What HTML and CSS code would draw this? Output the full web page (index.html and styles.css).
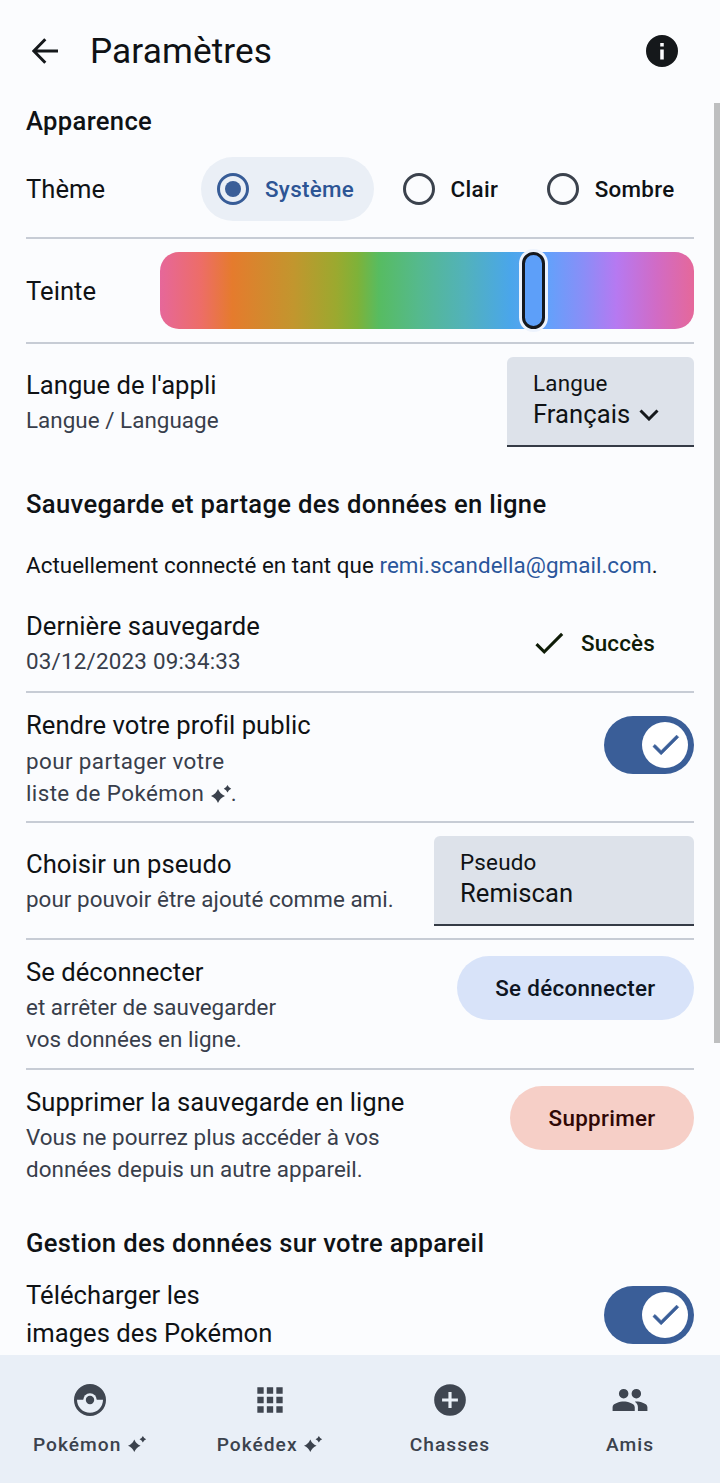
FILE: index.html
```html
<!DOCTYPE html>
<html lang="fr">
<head>
<meta charset="utf-8">
<title>Paramètres</title>
<link rel="stylesheet" href="styles.css">
</head>
<body>
<svg class="defs" aria-hidden="true">
  <symbol id="sparkle" viewBox="0 0 22 20"><path d="M8 5 Q10 10 15 12 Q10 14 8 19 Q6 14 1 12 Q6 10 8 5Z"/><path d="M17.500 1 Q18.600 3.600 21.200 4.700 Q18.600 5.800 17.500 8.400 Q16.400 5.800 13.800 4.700 Q16.400 3.600 17.500 1Z"/></symbol>
  <symbol id="done" viewBox="0 0 24 24"><path d="M9 16.2 4.800 12l-1.400 1.400L9 19 21 7l-1.400-1.400z"/></symbol>
</svg>
<div class="app">
  <header class="topbar">
    <svg class="back" viewBox="0 0 26 26"><path d="M26 13H2M13.300 1.300 1.800 13 13.300 24.700"/></svg>
    <h1 class="title">Paramètres</h1>
    <svg class="info" viewBox="2 2 20 20"><path d="M12 2a10 10 0 1 0 0 20 10 10 0 0 0 0-20zm1.100 15.300h-2.200v-6.300h2.200zm0-8.100h-2.200V7h2.200z"/></svg>
  </header>

  <main class="content">
    <h2 class="heading">Apparence</h2>
    <section class="row row-theme">
      <div class="label">Thème</div>
      <div class="radios">
        <label class="radio selected"><span class="dot"></span>Système</label>
        <label class="radio"><span class="dot"></span>Clair</label>
        <label class="radio"><span class="dot"></span>Sombre</label>
      </div>
    </section>
    <section class="row row-hue">
      <div class="label">Teinte</div>
      <div class="hue"><span class="thumb"></span></div>
    </section>
    <section class="row row-lang">
      <div class="texts"><div class="label">Langue de l'appli</div><div class="sub">Langue / Language</div></div>
      <div class="field field-lang">
        <span class="field-name">Langue</span>
        <span class="field-value">Français<svg class="chevron" viewBox="0 0 20 12"><path d="M1.500 1.500 10 10l8.500-8.500"/></svg></span>
      </div>
    </section>

    <h2 class="heading heading-online">Sauvegarde et partage des données en ligne</h2>
    <p class="account">Actuellement connecté en tant que <a class="mail">remi.scandella@gmail.com</a>.</p>
    <section class="row row-last">
      <div class="texts"><div class="label">Dernière sauvegarde</div><div class="sub digits">03/12/2023 09:34:33</div></div>
      <div class="status"><svg class="status-icon"><use href="#done"/></svg>Succès</div>
    </section>
    <section class="row row-tall">
      <div class="texts"><div class="label">Rendre votre profil public</div><div class="sub wide">pour partager votre<br>liste de Pokémon <svg class="spark"><use href="#sparkle"/></svg>.</div></div>
      <div class="switch"><span class="knob"><svg class="check"><use href="#done"/></svg></span></div>
    </section>
    <section class="row row-nick">
      <div class="texts"><div class="label">Choisir un pseudo</div><div class="sub">pour pouvoir être ajouté comme ami.</div></div>
      <div class="field field-nick"><span class="field-name">Pseudo</span><span class="field-value">Remiscan</span></div>
    </section>
    <section class="row row-tall">
      <div class="texts"><div class="label">Se déconnecter</div><div class="sub">et arrêter de sauvegarder<br>vos données en ligne.</div></div>
      <button class="button">Se déconnecter</button>
    </section>
    <section class="row row-tall row-end">
      <div class="texts"><div class="label">Supprimer la sauvegarde en ligne</div><div class="sub">Vous ne pourrez plus accéder à vos<br>données depuis un autre appareil.</div></div>
      <button class="button danger">Supprimer</button>
    </section>

    <h2 class="heading heading-device">Gestion des données sur votre appareil</h2>
    <section class="row row-download row-end">
      <div class="label">Télécharger les<br>images des Pokémon</div>
      <div class="switch"><span class="knob"><svg class="check"><use href="#done"/></svg></span></div>
    </section>
    <span class="scrollbar"></span>
  </main>

  <nav class="tabs">
    <a class="tab">
      <svg class="tab-icon" viewBox="0 0 38 38"><path fill-rule="evenodd" d="M19 3a16 16 0 1 0 0 32 16 16 0 0 0 0-32zM6 18.700h26a13 13 0 0 1-26 0z"/><circle class="cut" cx="19" cy="19" r="6.800"/><circle cx="19" cy="19" r="4.200"/></svg>
      <span class="tab-text">Pokémon <svg class="spark"><use href="#sparkle"/></svg></span>
    </a>
    <a class="tab">
      <svg class="tab-icon" viewBox="0 0 24 24"><path d="M4 8h4V4H4zm6 12h4v-4h-4zm-6 0h4v-4H4zm0-6h4v-4H4zm6 0h4v-4h-4zm6-10v4h4V4zm-6 4h4V4h-4zm6 6h4v-4h-4zm0 6h4v-4h-4z"/></svg>
      <span class="tab-text">Pokédex <svg class="spark"><use href="#sparkle"/></svg></span>
    </a>
    <a class="tab">
      <svg class="tab-icon" viewBox="0 0 24 24"><path d="M12 2a10 10 0 1 0 0 20 10 10 0 0 0 0-20zm5 11h-4v4h-2v-4H7v-2h4V7h2v4h4z"/></svg>
      <span class="tab-text">Chasses</span>
    </a>
    <a class="tab">
      <svg class="tab-icon" viewBox="0 0 24 24"><path d="M16 11a3 3 0 1 0 0-6 3 3 0 0 0 0 6zM8 11a3 3 0 1 0 0-6 3 3 0 0 0 0 6zM8 13c-2.330 0-7 1.170-7 3.500V19h14v-2.500C15 14.170 10.330 13 8 13zM16 13c-.290 0-.620.020-.970.050 1.160.840 1.970 1.970 1.970 3.450V19h6v-2.500c0-2.330-4.670-3.500-7-3.500z"/></svg>
      <span class="tab-text">Amis</span>
    </a>
  </nav>
</div>
</body>
</html>
```
FILE: styles.css
```css
* { box-sizing: border-box; }
body { margin: 0; background: #fbfcfe; color: #0f1215; font-family: Roboto, "Noto Sans", sans-serif; }
h1, h2, p { margin: 0; font-weight: 400; }
.defs { position: absolute; width: 0; height: 0; }
.app { display: flex; flex-direction: column; width: 720px; height: 1483px; overflow: hidden; }

.topbar { display: flex; align-items: center; flex: none; height: 102px; padding: 0 42px 0 32px; }
.back { width: 26px; height: 26px; fill: none; stroke: #15181b; stroke-width: 3; }
.title { flex: 1; margin-left: 32px; font-size: 35.2px; line-height: 45px; letter-spacing: .1px; }
.info { width: 32px; height: 32px; fill: #15181b; }

.content { position: relative; flex: none; height: 1253px; padding: 0 26px; overflow: hidden; }
.scrollbar { position: absolute; top: 1px; right: 0; width: 6.500px; height: 940px; background: #bebfc0; }
.heading { height: 39px; font-size: 25.6px; line-height: 39px; font-weight: 500; letter-spacing: .330px; }
.row { display: flex; justify-content: space-between; align-items: flex-start; border-bottom: 2px solid #c7ccd5; }
.label { font-size: 25.6px; line-height: 38px; letter-spacing: .04px; white-space: nowrap; }
.sub { font-size: 22.4px; line-height: 32px; letter-spacing: .04px; color: #383e4b; white-space: nowrap; }
.digits { letter-spacing: .2px; }
.wide { margin-top: 1px; letter-spacing: .4px; }

.row-theme { height: 98px; align-items: center; }
.radios { display: flex; align-items: center; }
.radio { display: flex; align-items: center; gap: 16px; height: 64px; padding: 0 19.500px 0 16px; border-radius: 32px; font-size: 22.4px; font-weight: 500; letter-spacing: .3px; }
.radio + .radio { margin-left: 13px; }
.selected { background: #eaeff6; color: #2d5595; }
.dot { display: grid; place-items: center; width: 32px; height: 32px; border: 3px solid #3b424d; border-radius: 50%; }
.selected .dot { border-color: #375c97; }
.selected .dot::after { content: ""; width: 16px; height: 16px; border-radius: 50%; background: #3a5e98; }

.row-hue { height: 105px; align-items: center; }
.hue { position: relative; width: 534px; height: 77px; border-radius: 19px; background: linear-gradient(90deg, #e6679a 0%, #ed6d67 7.700%, #e57b2d 13.500%, #c2962e 25%, #9ba92f 33%, #7eb239 37%, #57bc61 41%, #55b98e 48.500%, #52b2ba 57%, #4aa6ea 65.500%, #65a0fb 73%, #8b8df7 79.500%, #b679f1 85.500%, #d16bc5 93%, #e5689a 100%); }
.thumb { position: absolute; left: 362px; top: 0; width: 23px; height: 77px; border: 3.500px solid #15181d; border-radius: 12px; background: #5d9ff9; box-shadow: 0 0 0 3px #edf3fd; }

.row-lang { height: 103px; padding-top: 13px; border: 0; }
.row-lang .texts, .row-nick .texts { padding-top: 9px; }
.field { display: flex; flex-direction: column; height: 90px; padding: 10px 26px 0; border-bottom: 2px solid #353b46; border-radius: 6px 6px 0 0; background: #dde2ea; }
.field-lang { width: 187px; }
.field-nick { width: 260px; }
.field-name { font-size: 22.4px; line-height: 32px; letter-spacing: .2px; }
.field-value { display: flex; align-items: center; gap: 9px; font-size: 25.6px; line-height: 30px; letter-spacing: .05px; }
.chevron { width: 20px; height: 12px; margin-top: 1px; fill: none; stroke: #15181b; stroke-width: 3; }

.heading-online { margin-top: 38px; }
.account { margin-top: 25px; font-size: 22.4px; line-height: 32px; letter-spacing: .045px; white-space: nowrap; }
.mail { color: #2a569b; }

.row-last { height: 98.500px; margin-top: 13px; padding-top: 13px; }
.status { display: flex; align-items: center; gap: 13px; height: 71px; margin-right: 39px; font-size: 22.4px; font-weight: 500; letter-spacing: .2px; color: #0f1c07; }
.status-icon { width: 38px; height: 38px; fill: #0f1c07; }

.row-tall { height: 130px; padding-top: 13px; }
.row-end { height: 130.500px; border: 0; }
.spark { width: 22px; height: 20px; margin-bottom: -3px; fill: #3b424d; overflow: visible; }
.wide .spark { margin-right: -1.500px; }
.switch { display: flex; justify-content: flex-end; width: 90px; height: 58px; margin-top: 10px; padding: 6px; border-radius: 29px; background: #3a5e98; }
.knob { display: grid; place-items: center; width: 46px; height: 46px; border-radius: 50%; background: #fff; }
.check { width: 35px; height: 35px; fill: #3a5e98; stroke: #3a5e98; stroke-width: .5px; }

.row-nick { height: 117px; padding-top: 13px; }
.button { height: 64px; margin: 3px 0 0; padding: 0 38.500px; border: 0; border-radius: 32px; background: #d8e3f9; color: #0e1522; font: 500 22.4px Roboto, sans-serif; letter-spacing: .3px; }
.danger { background: #f6cfc7; color: #300806; }

.heading-device { margin-top: 23.500px; }
.row-download { padding-top: 13px; }

.tabs { display: grid; grid-template-columns: repeat(4, 1fr); flex: none; height: 128px; background: #e9eff7; }
.tab { display: flex; flex-direction: column; align-items: center; padding-top: 26px; color: #3b424d; }
.tab-icon { width: 38px; height: 38px; fill: #3f4651; }
.cut { fill: #e9eff7; }
.tab-text { display: block; margin-top: 13px; font-size: 19.2px; line-height: 26px; font-weight: 500; letter-spacing: 1px; white-space: nowrap; }
.tab-text .spark { width: 20px; height: 18px; margin-bottom: -2px; }
```
